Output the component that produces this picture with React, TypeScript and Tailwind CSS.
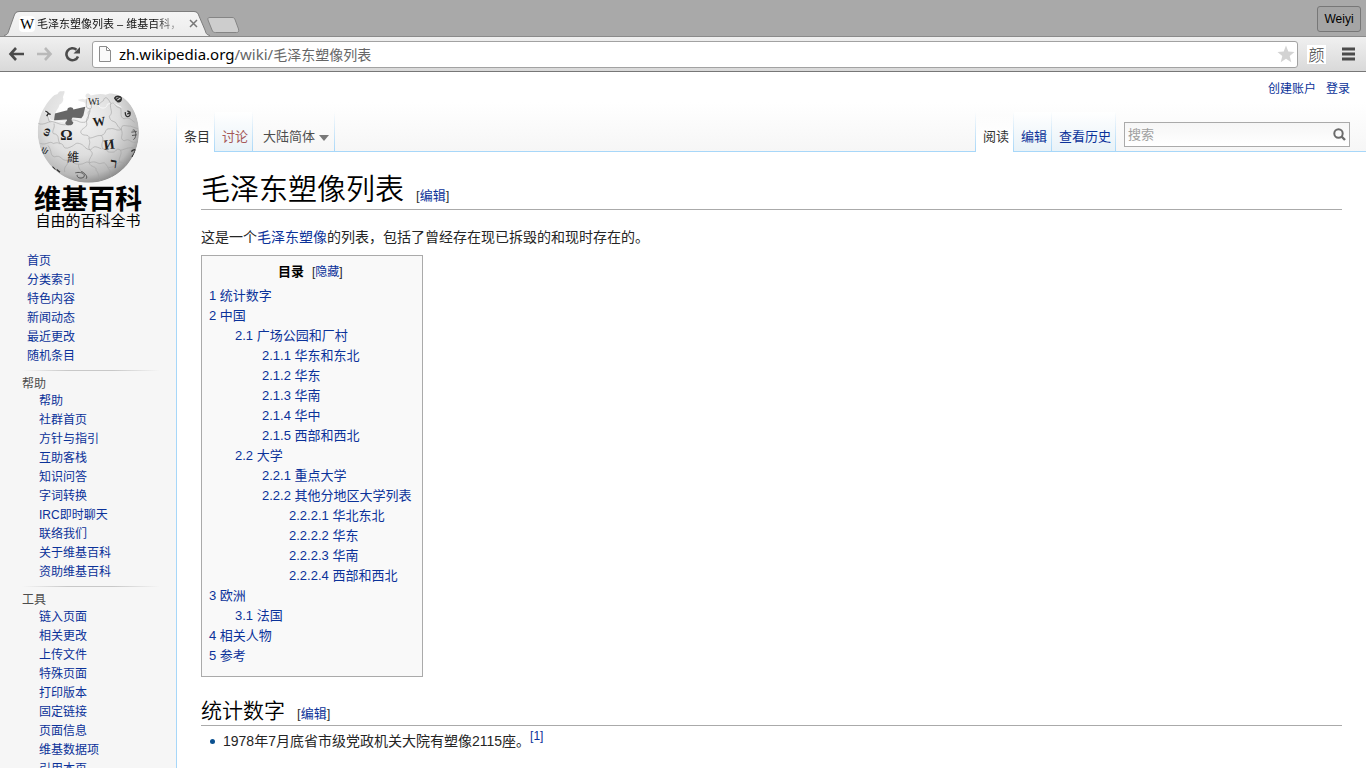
import type { ReactNode } from "react";

type NavGroup = { title: string; items: string[] };
type TocEntry = { no: string; label: string; level: number };

const mainNav = ["首页", "分类索引", "特色内容", "新闻动态", "最近更改", "随机条目"];

const navGroups: NavGroup[] = [
  {
    title: "帮助",
    items: [
      "帮助",
      "社群首页",
      "方针与指引",
      "互助客栈",
      "知识问答",
      "字词转换",
      "IRC即时聊天",
      "联络我们",
      "关于维基百科",
      "资助维基百科",
    ],
  },
  {
    title: "工具",
    items: [
      "链入页面",
      "相关更改",
      "上传文件",
      "特殊页面",
      "打印版本",
      "固定链接",
      "页面信息",
      "维基数据项",
      "引用本页",
    ],
  },
];

const toc: TocEntry[] = [
  { no: "1", label: "统计数字", level: 0 },
  { no: "2", label: "中国", level: 0 },
  { no: "2.1", label: "广场公园和厂村", level: 1 },
  { no: "2.1.1", label: "华东和东北", level: 2 },
  { no: "2.1.2", label: "华东", level: 2 },
  { no: "2.1.3", label: "华南", level: 2 },
  { no: "2.1.4", label: "华中", level: 2 },
  { no: "2.1.5", label: "西部和西北", level: 2 },
  { no: "2.2", label: "大学", level: 1 },
  { no: "2.2.1", label: "重点大学", level: 2 },
  { no: "2.2.2", label: "其他分地区大学列表", level: 2 },
  { no: "2.2.2.1", label: "华北东北", level: 3 },
  { no: "2.2.2.2", label: "华东", level: 3 },
  { no: "2.2.2.3", label: "华南", level: 3 },
  { no: "2.2.2.4", label: "西部和西北", level: 3 },
  { no: "3", label: "欧洲", level: 0 },
  { no: "3.1", label: "法国", level: 1 },
  { no: "4", label: "相关人物", level: 0 },
  { no: "5", label: "参考", level: 0 },
];

const tocIndent = ["pl-0", "pl-[26px]", "pl-[53px]", "pl-[80px]"];

function TabStrip() {
  return (
    <div className="flex h-9 shrink-0 items-start justify-between bg-[#a9a9a9] pl-1">
      <div className="flex h-9 items-end">
        <div className="relative h-[25px] w-[206px]">
          <svg className="absolute inset-0" width="206" height="25" viewBox="0 0 206 25" aria-hidden="true">
            <defs>
              <linearGradient id="tab" x1="0" y1="0" x2="0" y2="1">
                <stop offset="0" stopColor="#f5f5f5" />
                <stop offset="1" stopColor="#ececec" />
              </linearGradient>
            </defs>
            <path
              d="M0 25 C4 24 4 22 5 19 L10 5 C11 2 12 1 15 1 H190 C193 1 194 2 195 5 L201 19 C202 22 202 24 206 25 Z"
              fill="url(#tab)"
            />
            <path
              d="M0 24.5 C4 23.5 4 22 5 19 L10 5 C11 2 12 .5 15 .5 H190 C193 .5 194 2 195 5 L201 19 C202 22 202 23.5 206 24.5"
              fill="none"
              stroke="#7d7d7d"
            />
          </svg>
          <div className="relative flex h-[25px] items-center pl-[15px]">
            <span className="flex h-4 w-4 items-center justify-center rounded-sm bg-white font-['Liberation_Serif',serif] text-[15px] leading-4 text-black">
              W
            </span>
            <span className="ml-0.5 w-[148px] bg-[linear-gradient(90deg,#111_80%,#bbb_95%)] bg-clip-text text-[11px] leading-4 whitespace-nowrap text-transparent">
              毛泽东塑像列表 – 维基百科，
            </span>
            <button aria-label="关闭标签页" className="flex h-4 w-4 items-center justify-center">
              <svg width="9" height="9" viewBox="0 0 9 9" aria-hidden="true">
                <path d="M1 1l7 7M8 1L1 8" stroke="#777" strokeWidth="1.5" />
              </svg>
            </button>
          </div>
        </div>
        <button aria-label="新标签页" className="-ml-1 h-[22px]">
          <svg width="34" height="18" viewBox="0 0 34 18" aria-hidden="true">
            <path
              d="M4 1.5 H26 C28 1.5 28.5 2 29.200 4 L32.500 13 C33 15.500 32.500 16.500 30.500 16.500 H9.500 C7.500 16.500 6.800 16 6 14 L2 4 C1.500 2 2.200 1.500 4 1.500 Z"
              fill="#cdcdcd"
              stroke="#858585"
            />
          </svg>
        </button>
      </div>
      <button className="mt-1.5 mr-[5px] h-[26px] w-11 rounded-[3px] border border-[#777] bg-[#a5a5a5] text-xs text-black">
        Weiyi
      </button>
    </div>
  );
}

function Toolbar() {
  return (
    <div className="flex h-9 shrink-0 items-center border-t border-b border-t-[#8a8a8a] border-b-[#777] bg-[linear-gradient(#f0f0f0,#d9d9d9)] pr-[11px] pl-2">
      <button aria-label="后退" className="w-7">
        <svg width="17" height="16" viewBox="0 0 17 16" aria-hidden="true">
          <path d="M8 2L2.500 8L8 14M3 8H16" fill="none" stroke="#4b4b4b" strokeWidth="2.600" />
        </svg>
      </button>
      <button aria-label="前进" className="w-7">
        <svg width="17" height="16" viewBox="0 0 17 16" aria-hidden="true">
          <path d="M9 2L14.500 8L9 14M14 8H1" fill="none" stroke="#b9b9b9" strokeWidth="2.600" />
        </svg>
      </button>
      <button aria-label="重新加载" className="w-7">
        <svg width="17" height="16" viewBox="0 0 17 16" aria-hidden="true">
          <path d="M14 10.500A6 6 0 1 1 12.500 3.800" fill="none" stroke="#4b4b4b" strokeWidth="2.600" />
          <path d="M16 1V7.500H9.500Z" fill="#4b4b4b" />
        </svg>
      </button>
      <div className="flex h-[27px] min-w-0 flex-1 items-center rounded-[3px] border border-[#a2a2a2] bg-white px-1.5">
        <svg width="12" height="16" viewBox="0 0 12 16" aria-hidden="true">
          <path d="M.5.5H7.500L11.500 4.500V15.500H.5ZM7.500.5V4.500H11.500" fill="#fafafa" stroke="#8c8c8c" />
        </svg>
        <a
          href="#url"
          className="ml-2 flex-1 font-['Noto_Sans','Noto_Sans_CJK_SC',sans-serif] text-[15px] leading-5 whitespace-nowrap text-[#666]"
        >
          <span className="text-black">zh.wikipedia.org</span>/wiki/<span className="text-sm">毛泽东塑像列表</span>
        </a>
        <button aria-label="加入书签" className="-mr-1">
          <svg width="18" height="18" viewBox="0 0 18 18" aria-hidden="true">
            <path d="M9 .5L11.300 6.500L17.500 6.900L12.700 10.900L14.300 17.200L9 13.800L3.700 17.200L5.300 10.900L.5 6.900L6.700 6.500Z" fill="#d3d3d3" />
          </svg>
        </button>
      </div>
      <button className="ml-[9px] h-[19px] w-[19px] bg-white font-['Noto_Sans_CJK_SC',serif] text-base leading-[18px] font-light text-[#444]">
        颜
      </button>
      <button aria-label="菜单" className="ml-4">
        <svg width="13" height="14" viewBox="0 0 13 14" aria-hidden="true">
          <path d="M0 2H13M0 7H13M0 12H13" stroke="#4b4b4b" strokeWidth="3" />
        </svg>
      </button>
    </div>
  );
}

function Globe() {
  return (
    <svg className="ml-[3px]" width="140" height="107" viewBox="0 0 420 320" aria-hidden="true">
      <defs>
        <radialGradient id="globe" cx="0.42" cy="0.35" r="0.68">
          <stop offset="0" stopColor="#f4f4f4" />
          <stop offset="0.55" stopColor="#dedede" />
          <stop offset="0.85" stopColor="#b8b8b8" />
          <stop offset="1" stopColor="#858585" />
        </radialGradient>
        <clipPath id="globeShape">
          <path d="M133 32 C126 36 120 30 115 38 C114 46 97 42 86 54 C60 84 52 124 53 157 C55 240 124 308 205 308 C290 308 356 240 357 157 C357 124 346 92 326 68 C316 54 298 44 284 42 C276 38 262 40 258 44 C240 38 226 44 212 46 C206 36 194 40 197 50 C204 54 200 62 188 56 L174 59 C176 66 190 62 196 70 L198 84 L176 92 L106 104 C106 90 118 84 118 74 C126 70 130 64 130 56 C126 48 136 42 133 32 Z" />
        </clipPath>
      </defs>
      <g clipPath="url(#globeShape)">
        <circle cx="205" cy="157" r="152" fill="url(#globe)" />
        <g fill="none" stroke="#f8f8f8" strokeWidth="3">
          <path d="M72 92 C90 104 84 120 100 122 C120 126 124 120 142 130" />
          <path d="M195 86 C214 78 214 58 234 70 C238 90 262 86 262 72 C280 66 292 74 304 82" />
        </g>
        <g fill="none" stroke="#a3a3a3" strokeWidth="1.800">
          <path d="M55 130 C74 138 88 118 103 126 C124 132 116 134 146 134 C160 124 150 118 164 120 C182 124 176 128 196 126 C216 110 196 96 210 92" />
          <path d="M196 50 C204 66 194 74 202 84 C226 92 204 70 224 68 C238 78 240 66 250 62 C254 46 264 52 272 70 C290 66 280 80 302 84" />
          <path d="M210 86 C212 106 196 112 200 128 C204 144 184 142 182 156 C188 172 206 158 208 174 C220 174 230 164 244 166 C262 160 252 144 270 146 C284 142 288 154 304 148 C304 130 316 138 332 138 L354 146" />
          <path d="M272 70 C268 86 282 96 268 108 C270 128 286 120 290 132 C296 142 298 144 304 148" />
          <path d="M302 84 C306 100 298 110 312 116 C328 108 336 122 344 126" />
          <path d="M102 130 C106 146 94 150 100 160 C122 164 110 178 120 190 C136 192 124 204 142 204 C168 196 164 186 178 190 C194 194 192 204 206 208 C224 210 212 190 244 206" />
          <path d="M61 190 C82 196 88 180 100 190 C118 184 116 192 120 190 M84 196 C98 214 88 226 104 230 C124 222 124 244 142 240 C164 234 150 252 176 252 C194 254 198 240 208 248" />
          <path d="M206 174 C216 194 198 200 212 212 C226 224 204 232 208 248 C210 262 232 258 228 270 C240 282 232 294 242 302" />
          <path d="M244 166 C256 180 240 188 248 206 C272 208 252 216 274 216 C292 218 286 200 302 210 C316 208 322 200 344 204" />
          <path d="M304 148 C312 166 296 174 312 182 C332 172 328 190 350 186 M302 210 C308 224 292 236 300 246 C316 246 314 254 320 258" />
          <path d="M208 248 C228 240 232 252 242 250 C266 240 252 270 278 260 C292 250 292 250 300 246 M142 240 C146 260 130 254 134 276 M176 252 C172 270 196 276 192 304" />
          <path d="M80 104 C88 112 82 120 90 126 M262 262 C278 274 264 284 276 290" />
        </g>
        <g fill="#202020" className="font-['Liberation_Serif','Noto_Sans_CJK_SC',serif]">
          <text x="121" y="180" fontSize="46" fontWeight="bold">Ω</text>
          <text x="219" y="138" fontSize="38" fontWeight="bold" transform="rotate(-7 230 130)">W</text>
          <text x="252" y="207" fontSize="42" fontWeight="bold" transform="rotate(-7 265 200)">И</text>
          <text x="142" y="246" fontSize="36">維</text>
          <text x="204" y="75" fontSize="29">Wi</text>
          <text x="270" y="263" fontSize="42" fontWeight="bold" transform="rotate(8 275 255)">ר</text>
          <text x="66" y="170" fontSize="36" fontWeight="bold" transform="rotate(-72 76 158)">ω</text>
          <text x="64" y="220" fontSize="34" transform="rotate(30 74 210)">ψ</text>
        </g>
        <g fill="none" stroke="#303030" strokeWidth="4">
          <path d="M76 94 C84 92 84 104 92 102 M80 108 L86 98" />
          <path d="M284 54 C288 46 304 46 304 56 C302 70 290 66 284 54 Z M287 59 L301 49 M291 65 L305 56" />
          <path d="M316 96 C314 114 334 114 330 96 L322 92 M322 102 L328 98" />
          <path d="M334 214 C344 204 350 208 342 220 M336 230 L344 218" />
          <path d="M97 260 L106 269 M110 268 L120 276" />
        </g>
        <g fill="none" stroke="#555" strokeWidth="3">
          <path d="M338 150 C350 144 350 176 340 178 M334 156 L350 154 M336 166 L350 164" />
          <path d="M166 278 C180 274 198 280 192 290 C184 298 168 292 172 284 M198 296 C206 290 192 276 184 274" />
        </g>
      </g>
      <path
        d="M105 100 L142 90 C140 80 160 78 160 88 L196 80 L190 106 L184 114 L158 112 C152 118 156 124 160 126 C160 138 138 138 136 130 C136 124 144 122 140 118 L102 120 Z"
        fill="#666"
      />
    </svg>
  );
}

function Sidebar() {
  return (
    <aside className="w-44 shrink-0 text-xs text-[#4d4d4d]">
      <a href="#home" className="flex h-[180px] flex-col items-center pt-2 text-black">
        <Globe />
        <span className="text-[27px] leading-[26px] font-bold">维基百科</span>
        <span className="text-[15px] leading-4">自由的百科全书</span>
      </a>
      <nav className="pl-[22px]">
        <ul className="pb-1 pl-[5px]">
          {mainNav.map((item) => (
            <li key={item} className="h-[19px] leading-[19px]">
              <a href={`#${item}`} className="text-[#0b3299] hover:underline">
                {item}
              </a>
            </li>
          ))}
        </ul>
        {navGroups.map((group) => (
          <section key={group.title}>
            <div className="mr-4 h-px bg-[linear-gradient(90deg,transparent,#c8c8c8_33%,#c8c8c8_66%,transparent)]" />
            <h3 className="pt-[5px] leading-4">{group.title}</h3>
            <ul className="pb-1 pl-[17px]">
              {group.items.map((item) => (
                <li key={item} className="h-[19px] leading-[19px]">
                  <a href={`#${item}`} className="text-[#0b3299] hover:underline">
                    {item}
                  </a>
                </li>
              ))}
            </ul>
          </section>
        ))}
      </nav>
    </aside>
  );
}

function Divider() {
  return <span className="w-px shrink-0 bg-[linear-gradient(transparent,#a7d7f9)]" />;
}

function PageTab({ children, active, className = "text-[#0b3299]" }: { children: ReactNode; active?: boolean; className?: string }) {
  const look = active
    ? "bg-[linear-gradient(transparent,#fff_60%)]"
    : "border-b border-[#a7d7f9] bg-[linear-gradient(#fff,#e8f2f8)]";
  return (
    <a href="#tab" className={`flex shrink-0 items-end pr-1 pl-[7px] ${look} ${className}`}>
      <span className={active ? "pb-[5px] leading-5" : "pb-1 leading-5"}>{children}</span>
    </a>
  );
}

function PageHeader() {
  return (
    <header className="flex h-20 flex-col justify-between text-[13px]">
      <div className="flex justify-end gap-2.5 pt-2 pr-4 text-xs leading-[18px] text-[#0b3299]">
        <a href="#signup">创建账户</a>
        <a href="#login">登录</a>
      </div>
      <div className="flex h-10">
        <Divider />
        <PageTab active className="text-[#333]">条目</PageTab>
        <Divider />
        <PageTab className="text-[#a55858]">讨论</PageTab>
        <Divider />
        <button className="flex w-[81px] items-end gap-1 border-b border-[#a7d7f9] pb-1 pl-2.5 leading-5 text-[#4d4d4d]">
          大陆简体
          <svg className="mb-1.5" width="10" height="6" viewBox="0 0 10 6" aria-hidden="true">
            <path d="M0 0H10L5 6Z" fill="#797979" />
          </svg>
        </button>
        <Divider />
        <div className="flex-1 border-b border-[#a7d7f9]" />
        <Divider />
        <PageTab active className="text-[#333]">阅读</PageTab>
        <Divider />
        <PageTab>编辑</PageTab>
        <Divider />
        <PageTab>查看历史</PageTab>
        <Divider />
        <div className="border-b border-[#a7d7f9] pt-2.5 pr-4 pl-2">
          <form className="flex h-[25px] w-[226px] items-center border border-[#aaa] bg-[linear-gradient(#f6f6f6,#fff)]">
            <input
              aria-label="搜索"
              placeholder="搜索"
              className="min-w-0 flex-1 bg-transparent pl-[3px] outline-none placeholder:text-[#a0a0a0]"
            />
            <button type="button" aria-label="搜索" className="pr-[3px]">
              <svg width="13" height="13" viewBox="0 0 13 13" aria-hidden="true">
                <circle cx="5.500" cy="5.500" r="4.200" fill="none" stroke="#6b6b6b" strokeWidth="2" />
                <path d="M8.500 8.500L12 12" stroke="#6b6b6b" strokeWidth="2.400" />
              </svg>
            </button>
          </form>
        </div>
      </div>
    </header>
  );
}

function EditLink() {
  return (
    <span className="ml-3 text-[13px] leading-5 font-normal text-[#333]">
      [<a href="#edit" className="text-[#0b3299]">编辑</a>]
    </span>
  );
}

function Article() {
  return (
    <main className="flex-1 border-l border-[#a7d7f9] bg-white px-6 pt-5 text-sm leading-[22px] text-[#252525]">
      <h1 className="h-[38px] border-b border-[#aaa] text-[29px] leading-[37px] font-[350] text-black">
        毛泽东塑像列表
        <EditLink />
      </h1>
      <p className="mt-4">
        这是一个<a href="#statue" className="text-[#0b3299]">毛泽东塑像</a>的列表，包括了曾经存在现已拆毁的和现时存在的。
      </p>
      <div className="mt-[7px] w-fit border border-[#aaa] bg-[#f9f9f9] pt-1.5 pr-2.5 pb-2.5 pl-[7px] text-[13px] leading-5">
        <div className="mb-1 text-center">
          <h2 className="inline font-bold text-black">目录</h2>
          <span className="ml-2 text-xs">
            [<button className="text-[#0b3299]">隐藏</button>]
          </span>
        </div>
        <ul>
          {toc.map((entry) => (
            <li key={entry.no} className={`h-5 ${tocIndent[entry.level]}`}>
              <a href={`#${entry.no}`} className="text-[#0b3299] hover:underline">
                {entry.no} {entry.label}
              </a>
            </li>
          ))}
        </ul>
      </div>
      <h2 className="mt-5 border-b border-[#aaa] text-[21px] leading-7 font-[350] text-black">
        统计数字
        <EditLink />
      </h2>
      <ul className="mt-1 pl-[9px]">
        <li className="flex items-center gap-2">
          <span className="h-[5px] w-[5px] rounded-full bg-[#0b5190]" />
          <p>
            1978年7月底省市级党政机关大院有塑像2115座。
            <sup className="text-xs leading-none">
              <a href="#cite-1" className="text-[#0b3299]">[1]</a>
            </sup>
          </p>
        </li>
      </ul>
    </main>
  );
}

export default function App() {
  return (
    <div className="flex h-screen flex-col overflow-hidden font-['Liberation_Sans','Noto_Sans_CJK_SC',sans-serif]">
      <TabStrip />
      <Toolbar />
      <div className="flex min-h-0 flex-1 overflow-hidden bg-[linear-gradient(#fff,#fff_30px,#f6f6f6_80px)]">
        <Sidebar />
        <div className="flex min-w-0 flex-1 flex-col">
          <PageHeader />
          <Article />
        </div>
      </div>
    </div>
  );
}
